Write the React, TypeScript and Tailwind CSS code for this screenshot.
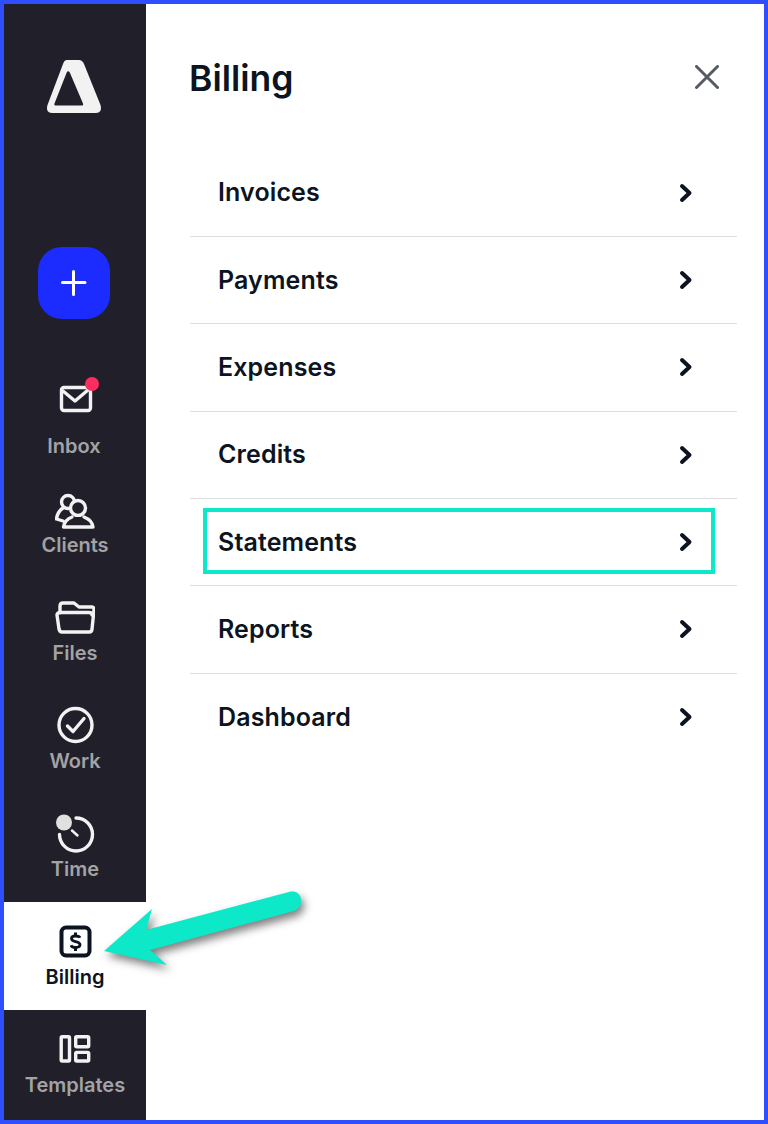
import React from 'react';

const ROWS = ['Invoices', 'Payments', 'Expenses', 'Credits', 'Statements', 'Reports', 'Dashboard'];

const iconProps = {
  viewBox: '0 0 40 40',
  fill: 'none',
  stroke: 'currentColor',
  strokeWidth: 3.400,
  strokeLinecap: 'round' as const,
  strokeLinejoin: 'round' as const,
  className: 'w-10 h-10',
};

const Logo = () => (
  <svg viewBox="0 0 56 54" className="w-14 h-[54px]">
    <path
      fillRule="evenodd"
      fill="#f2f2f2"
      d="M21 0H33C35 0 37 1.500 38 4L54.500 45C56 50 54 53 50 53H6C2 53 0 50 1.500 45L17 4C18 1.500 19 0 21 0ZM20.500 13 8.500 43.500C8 45 8.500 45.500 10 45.500H35.500C37 45.500 37.500 45 37 43.500L24 13C23 10.500 21.500 10.500 20.500 13Z"
    />
  </svg>
);

const ClientsIcon = () => (
  <svg {...iconProps}>
    <circle cx="13" cy="12" r="6.500" />
    <path d="M8 18C4 20.500 2 25 1.500 29L8 31" />
    <circle cx="23" cy="18" r="7.500" fill="#21202a" />
    <path d="M17 27C12 29 9 33 8.500 37H38C37.500 32 34 29 29 27" fill="#21202a" />
  </svg>
);

const FilesIcon = () => (
  <svg {...iconProps}>
    <path d="M5 15V8C5 6.500 6 5 8 5H19L24 9H37C38.500 9 39 10 39 12L37 31C37 33 36 34 34 34H7C5.500 34 4.500 33 4 31L2 17C2 15.500 3 14.500 5 14.500H34C36 14.500 37 15.500 37 17" />
  </svg>
);

const WorkIcon = () => (
  <svg {...iconProps}>
    <circle cx="20.500" cy="19" r="16.500" />
    <path d="M12.500 20 18 25.500 29 12.500" />
  </svg>
);

const TimeIcon = () => (
  <svg {...iconProps}>
    <path d="M21 4C30 4 37.500 11 37.500 20.500C37.500 29.500 30 37 21 37C12 37 4.500 29.500 4.500 20.500" />
    <path d="M17 16.500 22.500 21.500" strokeWidth={2.500} />
    <circle cx="9" cy="8.500" r="8" fill="#e0e0e0" stroke="none" />
  </svg>
);

const BillingIcon = () => (
  <svg {...iconProps} strokeWidth={4}>
    <rect x="6.500" y="5.500" width="28" height="28" rx="4.500" />
    <path
      d="M25 15.800C24.500 14.500 23 14 20.500 14C18 14 16.500 15 16.500 16.800C16.500 20.500 25 18.500 25 22.500C25 24.500 23.500 25.500 20.500 25.500C18 25.500 16.500 24.500 16 23.200"
      strokeWidth={2.800}
      strokeLinecap="butt"
    />
    <path d="M20.500 10.500V14M20.500 25.500V29" strokeWidth={3} strokeLinecap="butt" />
  </svg>
);

const TemplatesIcon = () => (
  <svg {...iconProps}>
    <rect x="6.200" y="6.700" width="8.300" height="24.300" rx="1" />
    <rect x="20.700" y="6.700" width="13" height="10" rx="1" />
    <rect x="20.700" y="22.400" width="13" height="8.600" rx="1" />
  </svg>
);

const NavItem = ({ label, icon }: { label: string; icon: React.ReactNode }) => (
  <div className="h-[108px] pt-5 flex flex-col items-center text-[#f2f2f2]">
    {icon}
    <span className="mt-[5px] text-[20px] leading-5 font-semibold text-[#a3a3a6]">{label}</span>
  </div>
);

const App: React.FC = () => {
  return (
    <div className="relative w-[768px] h-[1124px] border-4 border-[#2f4fff] bg-white flex overflow-hidden font-['Inter',sans-serif]">
      {/* Sidebar */}
      <aside className="w-[142px] shrink-0 bg-[#21202a] flex flex-col">
        <div className="mt-14 pl-[42px]">
          <Logo />
        </div>
        <button className="mt-[133px] ml-[34px] w-[72px] h-[72px] rounded-3xl bg-[#1c2cff] flex items-center justify-center">
          <svg viewBox="0 0 26 26" fill="none" stroke="white" strokeWidth="3" strokeLinecap="round" className="w-[26px] h-[26px]">
            <path d="M12.500 1.500V24.500M1.500 12.500H24" />
          </svg>
        </button>

        <div className="mt-[43px] h-[108px] pt-[17px] flex flex-col items-center pr-[2px] text-[#f2f2f2]">
          <div className="relative w-10 h-10">
            <svg {...iconProps}>
              <rect x="7.500" y="8.500" width="29" height="23" rx="2.500" />
              <path d="M9 12 21 22 34 11" />
            </svg>
            <span className="absolute left-[31px] top-[-2px] w-[14px] h-[14px] rounded-full bg-[#ff2d5f]"></span>
          </div>
          <span className="mt-[17px] text-[20px] leading-5 font-semibold text-[#a3a3a6]">Inbox</span>
        </div>
        <NavItem label="Clients" icon={<ClientsIcon />} />
        <NavItem label="Files" icon={<FilesIcon />} />
        <NavItem label="Work" icon={<WorkIcon />} />
        <NavItem label="Time" icon={<TimeIcon />} />
        <div className="h-[108px] pt-5 flex flex-col items-center bg-white text-[#0b1420]">
          <BillingIcon />
          <span className="mt-[5px] text-[20px] leading-5 font-semibold">Billing</span>
        </div>
        <NavItem label="Templates" icon={<TemplatesIcon />} />
      </aside>

      {/* Billing panel */}
      <main className="flex-1 pl-11 pr-[27px]">
        <header className="h-[145.6px] pt-[53px] flex items-start justify-between">
          <h1 className="-ml-px text-[35.500px] leading-11 font-semibold text-[#0b1420]">Billing</h1>
          <svg viewBox="0 0 24 24" fill="none" stroke="#555a63" strokeWidth="3" strokeLinecap="round" className="w-6 h-6 mt-2 mr-[18px]">
            <path d="M1.500 1.500 22.500 22.500M22.500 1.500 1.500 22.500" />
          </svg>
        </header>
        <ul>
          {ROWS.map((row, idx) => (
            <li
              key={row}
              className="relative h-[87.33px] pl-7 pr-[39px] flex items-center justify-between border-b border-[#dedede] last:border-b-0"
            >
              <span className="mb-px text-[25px] leading-8 tracking-[0.005em] font-semibold text-[#0b1420]">{row}</span>
              <svg viewBox="0 0 24 24" fill="none" stroke="#0b1420" strokeWidth="4" strokeLinecap="round" strokeLinejoin="round" className="w-6 h-6">
                <path d="M8 5 15.500 12 8 19" />
              </svg>
              {idx === 4 && (
                <span className="absolute left-[13px] right-[22px] top-[9.500px] bottom-[11px] border-4 border-[#0ce8c8]"></span>
              )}
            </li>
          ))}
        </ul>
      </main>

      {/* Annotation arrow */}
      <svg
        viewBox="0 0 210 90"
        className="absolute left-[92px] top-[880px] w-[210px] h-[90px] drop-shadow-[3px_5px_4px_rgba(0,0,0,0.5)]"
      >
        <path
          fill="#0ce8c8"
          d="M8 67 56 25 50 46 193 8C199 6.500 204 9 205 15C206 20 203 25 198 27L54 66 71 81Z"
        />
      </svg>
    </div>
  );
};

export default App;
